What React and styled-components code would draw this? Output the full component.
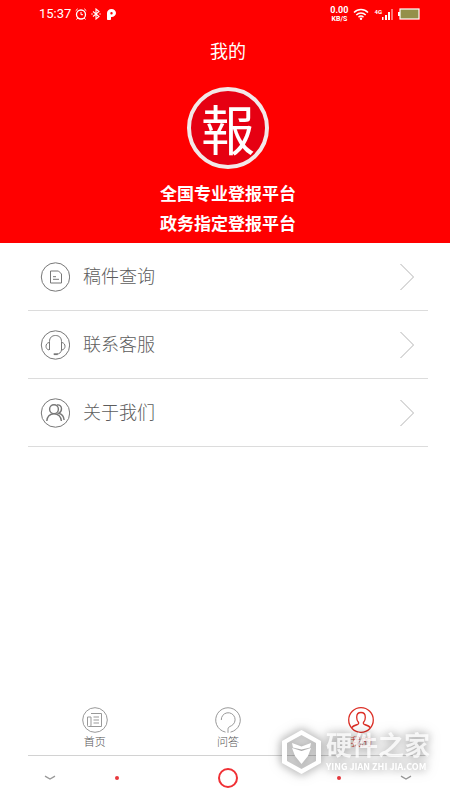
import { useState } from "react";
import styled, { createGlobalStyle } from "styled-components";

const GlobalStyle = createGlobalStyle`
  * {
    box-sizing: border-box;
  }

  body {
    margin: 0;
    background: #fff;
    font-family: Roboto, "Noto Sans CJK SC", sans-serif;
  }

  button {
    margin: 0;
    padding: 0;
    border: 0;
    background: none;
    font: inherit;
    cursor: pointer;
  }
`;

const Wrapper = styled.div`
  position: relative;
  display: flex;
  flex-direction: column;
  min-height: 100vh;
`;

const Header = styled.header`
  height: 243px;
  background: #ff0000;
  color: #fff;
`;

const StatusBar = styled.div`
  display: flex;
  justify-content: space-between;
  align-items: center;
  height: 28px;
  padding: 0 30px 0 39px;
`;

const StatusGroup = styled.div`
  display: flex;
  align-items: center;
  gap: ${({ $gap }) => $gap}px;
`;

const Time = styled.span`
  font-size: 13px;
  line-height: 16px;
`;

const Speed = styled.div`
  font-size: 7px;
  line-height: 8px;
  font-weight: bold;
  text-align: center;
`;

const SpeedValue = styled.div`
  font-size: 9px;
  line-height: 10px;
`;

const Profile = styled.div`
  display: flex;
  flex-direction: column;
  align-items: center;
  padding: 9px 22px 0 28px;
`;

const Title = styled.h1`
  margin: 0 0 20px;
  font-size: 18px;
  line-height: 30px;
  font-weight: normal;
`;

const Logo = styled.div`
  display: flex;
  align-items: center;
  justify-content: center;
  width: 82px;
  height: 82px;
  margin-bottom: 10px;
  border: 4px solid #f3e9e9;
  border-radius: 50%;
  background: #e60012;
  font-family: "Noto Sans CJK TC", sans-serif;
  font-size: 54px;
  line-height: 74px;
`;

const Slogan = styled.p`
  margin: 0;
  font-size: 17px;
  line-height: 30px;
  font-weight: bold;
`;

const Menu = styled.main`
  flex: 1;
  padding: 0 22px 0 28px;
`;

const MenuRow = styled.button`
  display: flex;
  align-items: center;
  width: 100%;
  height: 68px;
  padding: 0 14px 0 12px;
  border-bottom: 1px solid #dcdcdc;
  color: #5c5c5c;
  font-size: 18px;
  font-weight: 300;
  text-align: left;

  svg {
    color: #777;
  }
`;

const MenuLabel = styled.span`
  flex: 1;
  padding-left: 13px;
  line-height: 26px;
`;

const TabBar = styled.nav`
  display: grid;
  grid-template-columns: repeat(3, 1fr);
  margin: 0 22px 0 28px;
  padding-bottom: 4px;
  border-bottom: 1px solid #d2d2d2;
`;

const Tab = styled.button`
  display: flex;
  flex-direction: column;
  align-items: center;
  gap: 2px;
  color: ${({ $active }) => ($active ? "#dc2f26" : "#555")};
  font-size: 11px;
  line-height: 16px;
  font-weight: 300;

  svg {
    color: ${({ $active }) => ($active ? "#dc2f26" : "#999")};
  }
`;

const SystemNav = styled.div`
  display: grid;
  grid-template-columns: 22fr 45fr 66fr 45fr 22fr;
  align-items: center;
  justify-items: center;
  height: 44px;
  padding: 0 22px 0 28px;
`;

const Dot = styled.span`
  width: 4px;
  height: 4px;
  border-radius: 50%;
  background: #e8383d;
`;

const HomeButton = styled.button`
  width: 20px;
  height: 20px;
  border: 2px solid #f03035;
  border-radius: 50%;
`;

const Watermark = styled.div`
  position: absolute;
  right: 20px;
  bottom: 26px;
  display: flex;
  align-items: center;
  gap: 5px;
  color: #fff;
  filter: drop-shadow(0 0 4px rgba(0, 0, 0, 0.3))
    drop-shadow(0 0 6px rgba(0, 0, 0, 0.25));
  pointer-events: none;
`;

const WatermarkName = styled.div`
  font-size: 26px;
  line-height: 28px;
  font-weight: bold;
  opacity: 0.8;
`;

const WatermarkSite = styled.div`
  font-family: "Noto Sans CJK SC", sans-serif;
  font-size: 9px;
  line-height: 13px;
  font-weight: bold;
  white-space: nowrap;
`;

const Icon = ({ size = 30, children }) => (
  <svg
    width={size}
    height={size}
    viewBox={`0 0 ${size} ${size}`}
    fill="none"
    stroke="currentColor"
    aria-hidden="true"
  >
    {children}
  </svg>
);

const DocumentIcon = () => (
  <Icon>
    <circle cx="15.5" cy="15" r="14.2" />
    <path d="M10.5 9h8l3 3v9h-11z M13 14.700h3 M13 17.300h6" />
  </Icon>
);

const ServiceIcon = () => (
  <Icon>
    <circle cx="15.5" cy="15" r="14.2" />
    <path d="M9.500 20V11.500c0-4 2.500-6 6-6s6 2 6 6V20" />
    <path d="M9 12.500c-2 .5-3 2-3 3.800s1 3.200 3 3.700 M22 12.500c2 .5 3 2 3 3.800s-1 3.200-3 3.700" />
    <path d="M21.500 20c-.5 2.600-2.200 4-4.500 4" />
    <path d="M13.700 24.200h4" strokeWidth="1.8" />
  </Icon>
);

const AboutIcon = () => (
  <Icon>
    <circle cx="15.5" cy="15" r="14.2" />
    <g strokeWidth="1.4">
      <circle cx="14" cy="11.2" r="4.4" />
      <path d="M6.800 23c.2-4 3-7.300 7.200-7.300s7.200 3.300 7.400 7.300" />
      <path d="M17 7c2.500-.6 4.500 1.200 4.500 3.700 0 2-1 3.600-2.700 4.500 3.200.7 5 3.600 5.300 6.800" />
    </g>
  </Icon>
);

const Arrow = () => (
  <svg width="14" height="28" viewBox="0 0 14 28" fill="none" aria-hidden="true">
    <path d="M.5 1l13 13-13 13" stroke="#b4b4b4" />
  </svg>
);

const HomeIcon = () => (
  <Icon size={26}>
    <circle cx="13" cy="13" r="12.3" />
    <path d="M9 6.500h10.500v13H6.500c-.8 0-1-.4-1-1V10H9v8c0 1-.6 1.500-1.500 1.500" />
    <path d="M11.500 10h5.500 M11.500 13h5.500 M11.500 16h5.500" />
  </Icon>
);

const QuestionIcon = () => (
  <Icon size={26}>
    <path d="M10.500 25.100a12.300 12.300 0 1 1 5 0" />
    <path d="M6.300 13a6.900 6.900 0 1 1 10 5.800c-2.300 1-3.300 1.700-3.300 3.500v3.500" />
  </Icon>
);

const MineIcon = () => (
  <Icon size={26}>
    <g strokeWidth="1.3">
      <circle cx="13" cy="13" r="12.3" />
      <path d="M3.500 20.800c1.200-1.800 3.500-2.600 6-3.300 1.300-.4 1.500-1.700.6-2.700C9 13.400 8.700 12 8.700 10.200 8.700 7.300 10.300 5.500 13 5.500s4.300 1.800 4.300 4.700c0 1.800-.3 3.200-1.400 4.600-.9 1-.7 2.300.6 2.700 2.500.7 4.800 1.500 6 3.300" />
    </g>
  </Icon>
);

const AlarmIcon = () => (
  <svg width="12" height="12" viewBox="0 0 12 12" fill="none" stroke="#fff">
    <circle cx="6" cy="6.5" r="4.5" strokeWidth="1.3" />
    <path d="M6 4v2.700h2 M.7 2.700L2.700.8 M11.300 2.700L9.300.8 M2.800 10l-1.300 1.500 M9.200 10l1.300 1.500" />
  </svg>
);

const BluetoothIcon = () => (
  <svg width="10" height="12" viewBox="0 0 10 12" fill="none" stroke="#fff">
    <path d="M2 3.500l6 5L5 11V1l3 2.500-6 5" strokeWidth="1.1" />
    <path d="M.5 6h1 M8.500 6h1" strokeWidth="1.3" />
  </svg>
);

const ParkingIcon = () => (
  <svg width="12" height="12" viewBox="0 0 12 12">
    <path
      fill="#fff"
      fillRule="evenodd"
      d="M6.500 1C9 1 11 2.700 11 5S9 9 6.500 9H6v2c0 .6-.4 1-1 1H3c-.6 0-1-.4-1-1V5c0-2.300 2-4 4.500-4z M6.500 4a1.200 1.200 0 1 0 0 2.400 1.200 1.200 0 0 0 0-2.400z"
    />
  </svg>
);

const WifiIcon = () => (
  <svg width="16" height="12" viewBox="0 0 16 12" fill="none" stroke="#fff">
    <path d="M1 4.500c4-4 10-4 14 0 M3.300 7c2.700-2.700 6.700-2.700 9.400 0 M5.500 9.200c1.500-1.400 3.500-1.400 5 0" strokeWidth="1.5" />
    <circle cx="8" cy="10.7" r="1.2" fill="#fff" stroke="none" />
  </svg>
);

const Network = styled.div`
  display: flex;
  align-items: flex-start;
  height: 12px;
  font-size: 6px;
  line-height: 7px;
  font-weight: bold;
`;

const SignalIcon = () => (
  <svg width="11" height="12" viewBox="0 0 11 12" fill="#fff">
    <path d="M0 9h1.500v3H0z M3 7h2v5H3z M6 4h2v8H6z" />
    <path d="M9 1h2v11H9z" opacity=".45" />
  </svg>
);

const BatteryIcon = () => (
  <svg width="22" height="12" viewBox="0 0 22 12">
    <path d="M0 4h2v4H0z" fill="#fff" />
    <rect x="2" y="1" width="19" height="10" fill="#94904a" stroke="#fff" strokeWidth="1.2" />
  </svg>
);

const SmallChevron = () => (
  <svg width="12" height="6" viewBox="0 0 12 6" fill="none" aria-hidden="true">
    <path d="M1 1.200l5 2.800 5-2.800" stroke="#999" strokeWidth="1.4" />
  </svg>
);

const HexLogo = () => (
  <svg width="39" height="44" viewBox="0 0 39 44" aria-hidden="true">
    <path
      fill="#fff"
      fillRule="evenodd"
      d="M19.500 0L39 11v22L19.500 44 0 33V11z M19.500 5L5 13v18l14.500 8 14.500-8V13z"
    />
    <path fill="#fff" d="M10 13l9.500 3.500L29 13l-1 4.500-8.500 2-8.500-2z M10 18l9.500 3 9.500-3-3 8-6.500 8-6.500-8z" />
  </svg>
);

const menuList = [
  { id: 1, name: "稿件查询", icon: <DocumentIcon /> },
  { id: 2, name: "联系客服", icon: <ServiceIcon /> },
  { id: 3, name: "关于我们", icon: <AboutIcon /> },
];

const tabList = [
  { id: "home", name: "首页", icon: <HomeIcon /> },
  { id: "question", name: "问答", icon: <QuestionIcon /> },
  { id: "mine", name: "我的", icon: <MineIcon /> },
];

const App = () => {
  const [activeTab, setActiveTab] = useState("mine");

  return (
    <Wrapper>
      <GlobalStyle />
      <Header>
        <StatusBar>
          <StatusGroup $gap={4}>
            <Time>15:37</Time>
            <AlarmIcon />
            <BluetoothIcon />
            <ParkingIcon />
          </StatusGroup>
          <StatusGroup $gap={5}>
            <Speed>
              <SpeedValue>0.00</SpeedValue>
              KB/S
            </Speed>
            <WifiIcon />
            <Network>
              4G
              <SignalIcon />
            </Network>
            <BatteryIcon />
          </StatusGroup>
        </StatusBar>
        <Profile>
          <Title>我的</Title>
          <Logo>報</Logo>
          <Slogan>全国专业登报平台</Slogan>
          <Slogan>政务指定登报平台</Slogan>
        </Profile>
      </Header>

      <Menu>
        {menuList.map((data) => (
          <MenuRow type="button" key={data.id}>
            {data.icon}
            <MenuLabel>{data.name}</MenuLabel>
            <Arrow />
          </MenuRow>
        ))}
      </Menu>

      <TabBar>
        {tabList.map((data) => (
          <Tab
            type="button"
            key={data.id}
            $active={data.id === activeTab}
            onClick={() => setActiveTab(data.id)}
          >
            {data.icon}
            {data.name}
          </Tab>
        ))}
      </TabBar>

      <SystemNav>
        <SmallChevron />
        <Dot />
        <HomeButton type="button" aria-label="主屏幕" />
        <Dot />
        <SmallChevron />
      </SystemNav>

      <Watermark>
        <HexLogo />
        <div>
          <WatermarkName>硬件之家</WatermarkName>
          <WatermarkSite>YING JIAN ZHI JIA.COM</WatermarkSite>
        </div>
      </Watermark>
    </Wrapper>
  );
};

export default App;
